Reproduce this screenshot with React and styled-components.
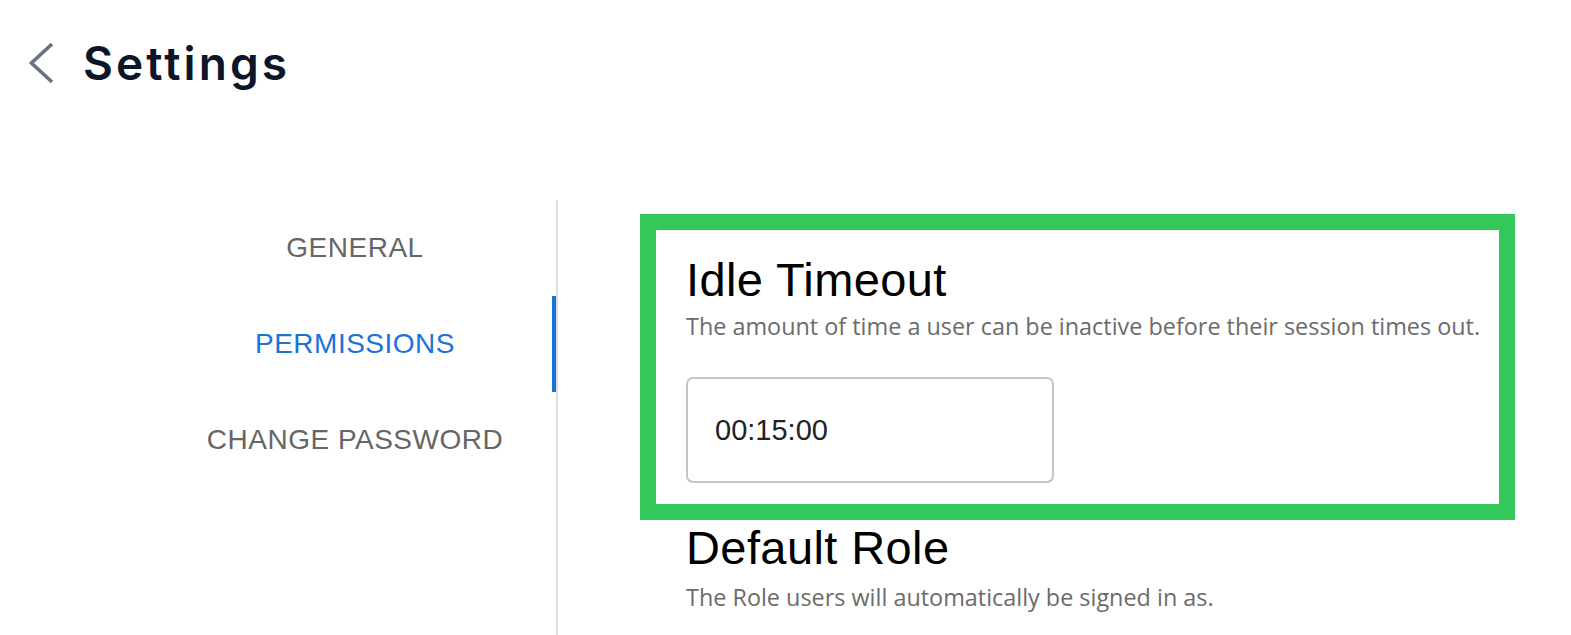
import React, { useState } from 'react';
import styled, { createGlobalStyle } from 'styled-components';

const GlobalStyle = createGlobalStyle`
  html, body {
    margin: 0;
    padding: 0;
    background: #ffffff;
  }
  body {
    font-family: "Liberation Sans", Arial, sans-serif;
  }
`;

const Page = styled.div`
  min-height: 100vh;
  display: flex;
  flex-direction: column;
`;

const Header = styled.header`
  height: 126px;
  display: flex;
  align-items: center;
  gap: 28px;
  padding-left: 29px;
  margin-bottom: 74px;
`;

const BackButton = styled.button`
  border: none;
  background: none;
  padding: 0;
  display: flex;
  cursor: pointer;
`;

const PageTitle = styled.h1`
  margin: 0;
  font-family: Inter, "Noto Sans", sans-serif;
  font-weight: 600;
  font-size: 46px;
  letter-spacing: 3.1px;
  color: #0c1628;
`;

const Main = styled.div`
  flex: 1;
  display: flex;
`;

const Sidebar = styled.nav`
  width: 402px;
  margin-left: 154px;
  border-right: 2px solid #dddddd;
  display: flex;
  flex-direction: column;
`;

const NavItem = styled.button`
  position: relative;
  height: 96px;
  border: none;
  background: none;
  padding: 0;
  display: flex;
  align-items: center;
  justify-content: center;
  font-family: "Liberation Sans", Arial, sans-serif;
  font-size: 28px;
  letter-spacing: 0.5px;
  color: ${(p) => (p.$active ? '#1a73d9' : '#666666')};
  cursor: pointer;

  &::after {
    content: '';
    position: absolute;
    top: 0;
    right: 0;
    bottom: 0;
    width: 4px;
    background: ${(p) => (p.$active ? '#1a73d9' : 'transparent')};
  }
`;

const Content = styled.div`
  flex: 1;
  padding: 30px 0 0 98px;
`;

const Section = styled.section`
  width: 843px;
  box-sizing: border-box;
  padding: ${(p) => (p.$highlight ? '24px 30px 21px' : '18px 30px 21px')};
  outline: ${(p) => (p.$highlight ? '16px solid #34c759' : 'none')};
`;

const SectionTitle = styled.h2`
  margin: 0 0 ${(p) => p.$space || 0}px;
  font-family: "Liberation Sans", Arial, sans-serif;
  font-weight: 400;
  font-size: 47px;
  line-height: 52px;
  letter-spacing: 0.4px;
  color: #000000;
`;

const SectionText = styled.p`
  margin: 0;
  font-family: "Open Sans", "Noto Sans", sans-serif;
  font-size: 23.4px;
  line-height: 30px;
  white-space: nowrap;
  color: #6b6b6b;
`;

const TimeInput = styled.input`
  display: block;
  margin-top: 36px;
  width: 368px;
  height: 106px;
  box-sizing: border-box;
  border: 2px solid #c4c4c4;
  border-radius: 7px;
  padding: 0 0 0 27px;
  font-family: "Liberation Sans", Arial, sans-serif;
  font-size: 29px;
  color: #222222;
  outline: none;
`;

const ChevronLeft = () => (
  <svg width="26" height="42" viewBox="0 0 26 42" fill="none">
    <path d="M23 2 L2.5 21 L23 40" stroke="#6b7380" strokeWidth="3.6" />
  </svg>
);

const tabs = ['GENERAL', 'PERMISSIONS', 'CHANGE PASSWORD'];

const App = () => {
  const [tab, setTab] = useState('PERMISSIONS');
  const [timeout, setTimeoutValue] = useState('00:15:00');

  return (
    <Page>
      <GlobalStyle />
      <Header>
        <BackButton aria-label="Back">
          <ChevronLeft />
        </BackButton>
        <PageTitle>Settings</PageTitle>
      </Header>
      <Main>
        <Sidebar>
          {tabs.map((t) => (
            <NavItem key={t} $active={t === tab} onClick={() => setTab(t)}>
              {t}
            </NavItem>
          ))}
        </Sidebar>
        <Content>
          <Section $highlight>
            <SectionTitle $space={5}>Idle Timeout</SectionTitle>
            <SectionText>The amount of time a user can be inactive before their session times out.</SectionText>
            <TimeInput value={timeout} onChange={(e) => setTimeoutValue(e.target.value)} />
          </Section>
          <Section>
            <SectionTitle $space={8}>Default Role</SectionTitle>
            <SectionText>The Role users will automatically be signed in as.</SectionText>
          </Section>
        </Content>
      </Main>
    </Page>
  );
};

export default App;
